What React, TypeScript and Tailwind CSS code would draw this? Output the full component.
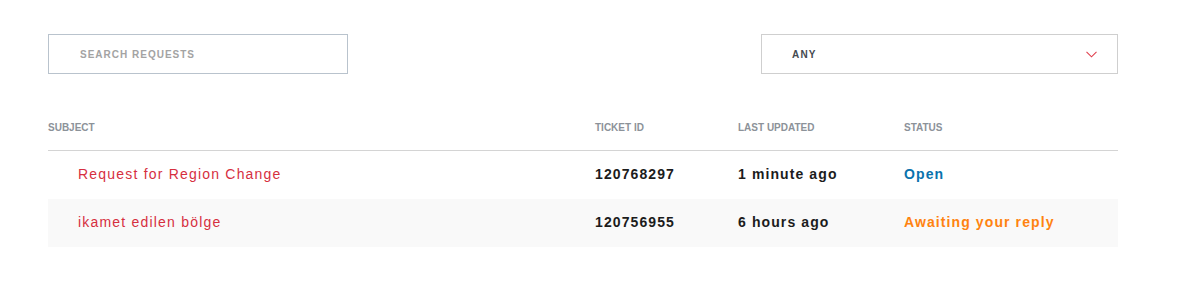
import { useState } from "react";

interface Ticket {
  id: string;
  subject: string;
  updated: string;
  status: "open" | "awaiting";
}

const tickets: Ticket[] = [
  { id: "120768297", subject: "Request for Region Change", updated: "1 minute ago", status: "open" },
  { id: "120756955", subject: "ikamet edilen bölge", updated: "6 hours ago", status: "awaiting" },
];

const cols = "grid grid-cols-[547px_143px_166px_214px]";

export default function App() {
  const [query, setQuery] = useState("");

  return (
    <div className="min-h-[294px] w-full bg-white font-['Liberation_Sans',Arial,sans-serif]">
      <div className="mx-[48px] w-[1070px] pt-[34px]">
        {/* Filters */}
        <div className="flex items-center justify-between">
          <input
            value={query}
            onChange={(e) => setQuery(e.target.value)}
            placeholder="SEARCH REQUESTS"
            className="h-10 w-[300px] border border-[#b9c3cd] px-[31px] text-[10px] font-bold tracking-[1px] text-[#555] outline-none placeholder:text-[#a3a3a3]"
          />
          <div className="flex h-10 w-[357px] items-center justify-between border border-[#cfcfcf] pl-[30px] pr-[20px]">
            <span className="text-[10px] font-bold tracking-[1.2px] text-[#454a50]">ANY</span>
            <svg width="11" height="7" viewBox="0 0 11 7" fill="none">
              <path d="M0.5 0.8 L5.5 5.8 L10.5 0.8" stroke="#e0404e" strokeWidth="1.1" />
            </svg>
          </div>
        </div>

        {/* Table header */}
        <div className={`${cols} mt-[30px] h-[47px] items-center border-b border-[#d4d4d4] text-[10px] font-bold text-[#8c9299]`}>
          <span>SUBJECT</span>
          <span>TICKET ID</span>
          <span>LAST UPDATED</span>
          <span>STATUS</span>
        </div>

        {/* Rows */}
        {tickets.map((t, i) => (
          <div
            key={t.id}
            className={`${cols} h-[48px] items-center pb-[2px] text-[14px] tracking-[1.1px] ${i % 2 === 1 ? "bg-[#f9f9f9]" : "bg-white"}`}
          >
            <span className="pl-[30px] tracking-[1.2px] text-[#d62f3f]">{t.subject}</span>
            <span className="font-bold text-[#1c1c1c]">{t.id}</span>
            <span className="font-bold text-[#1c1c1c]">{t.updated}</span>
            {t.status === "open" ? (
              <span className="font-bold text-[#0a72ad]">Open</span>
            ) : (
              <span className="font-bold text-[#ff8310]">Awaiting your reply</span>
            )}
          </div>
        ))}
      </div>
    </div>
  );
}
